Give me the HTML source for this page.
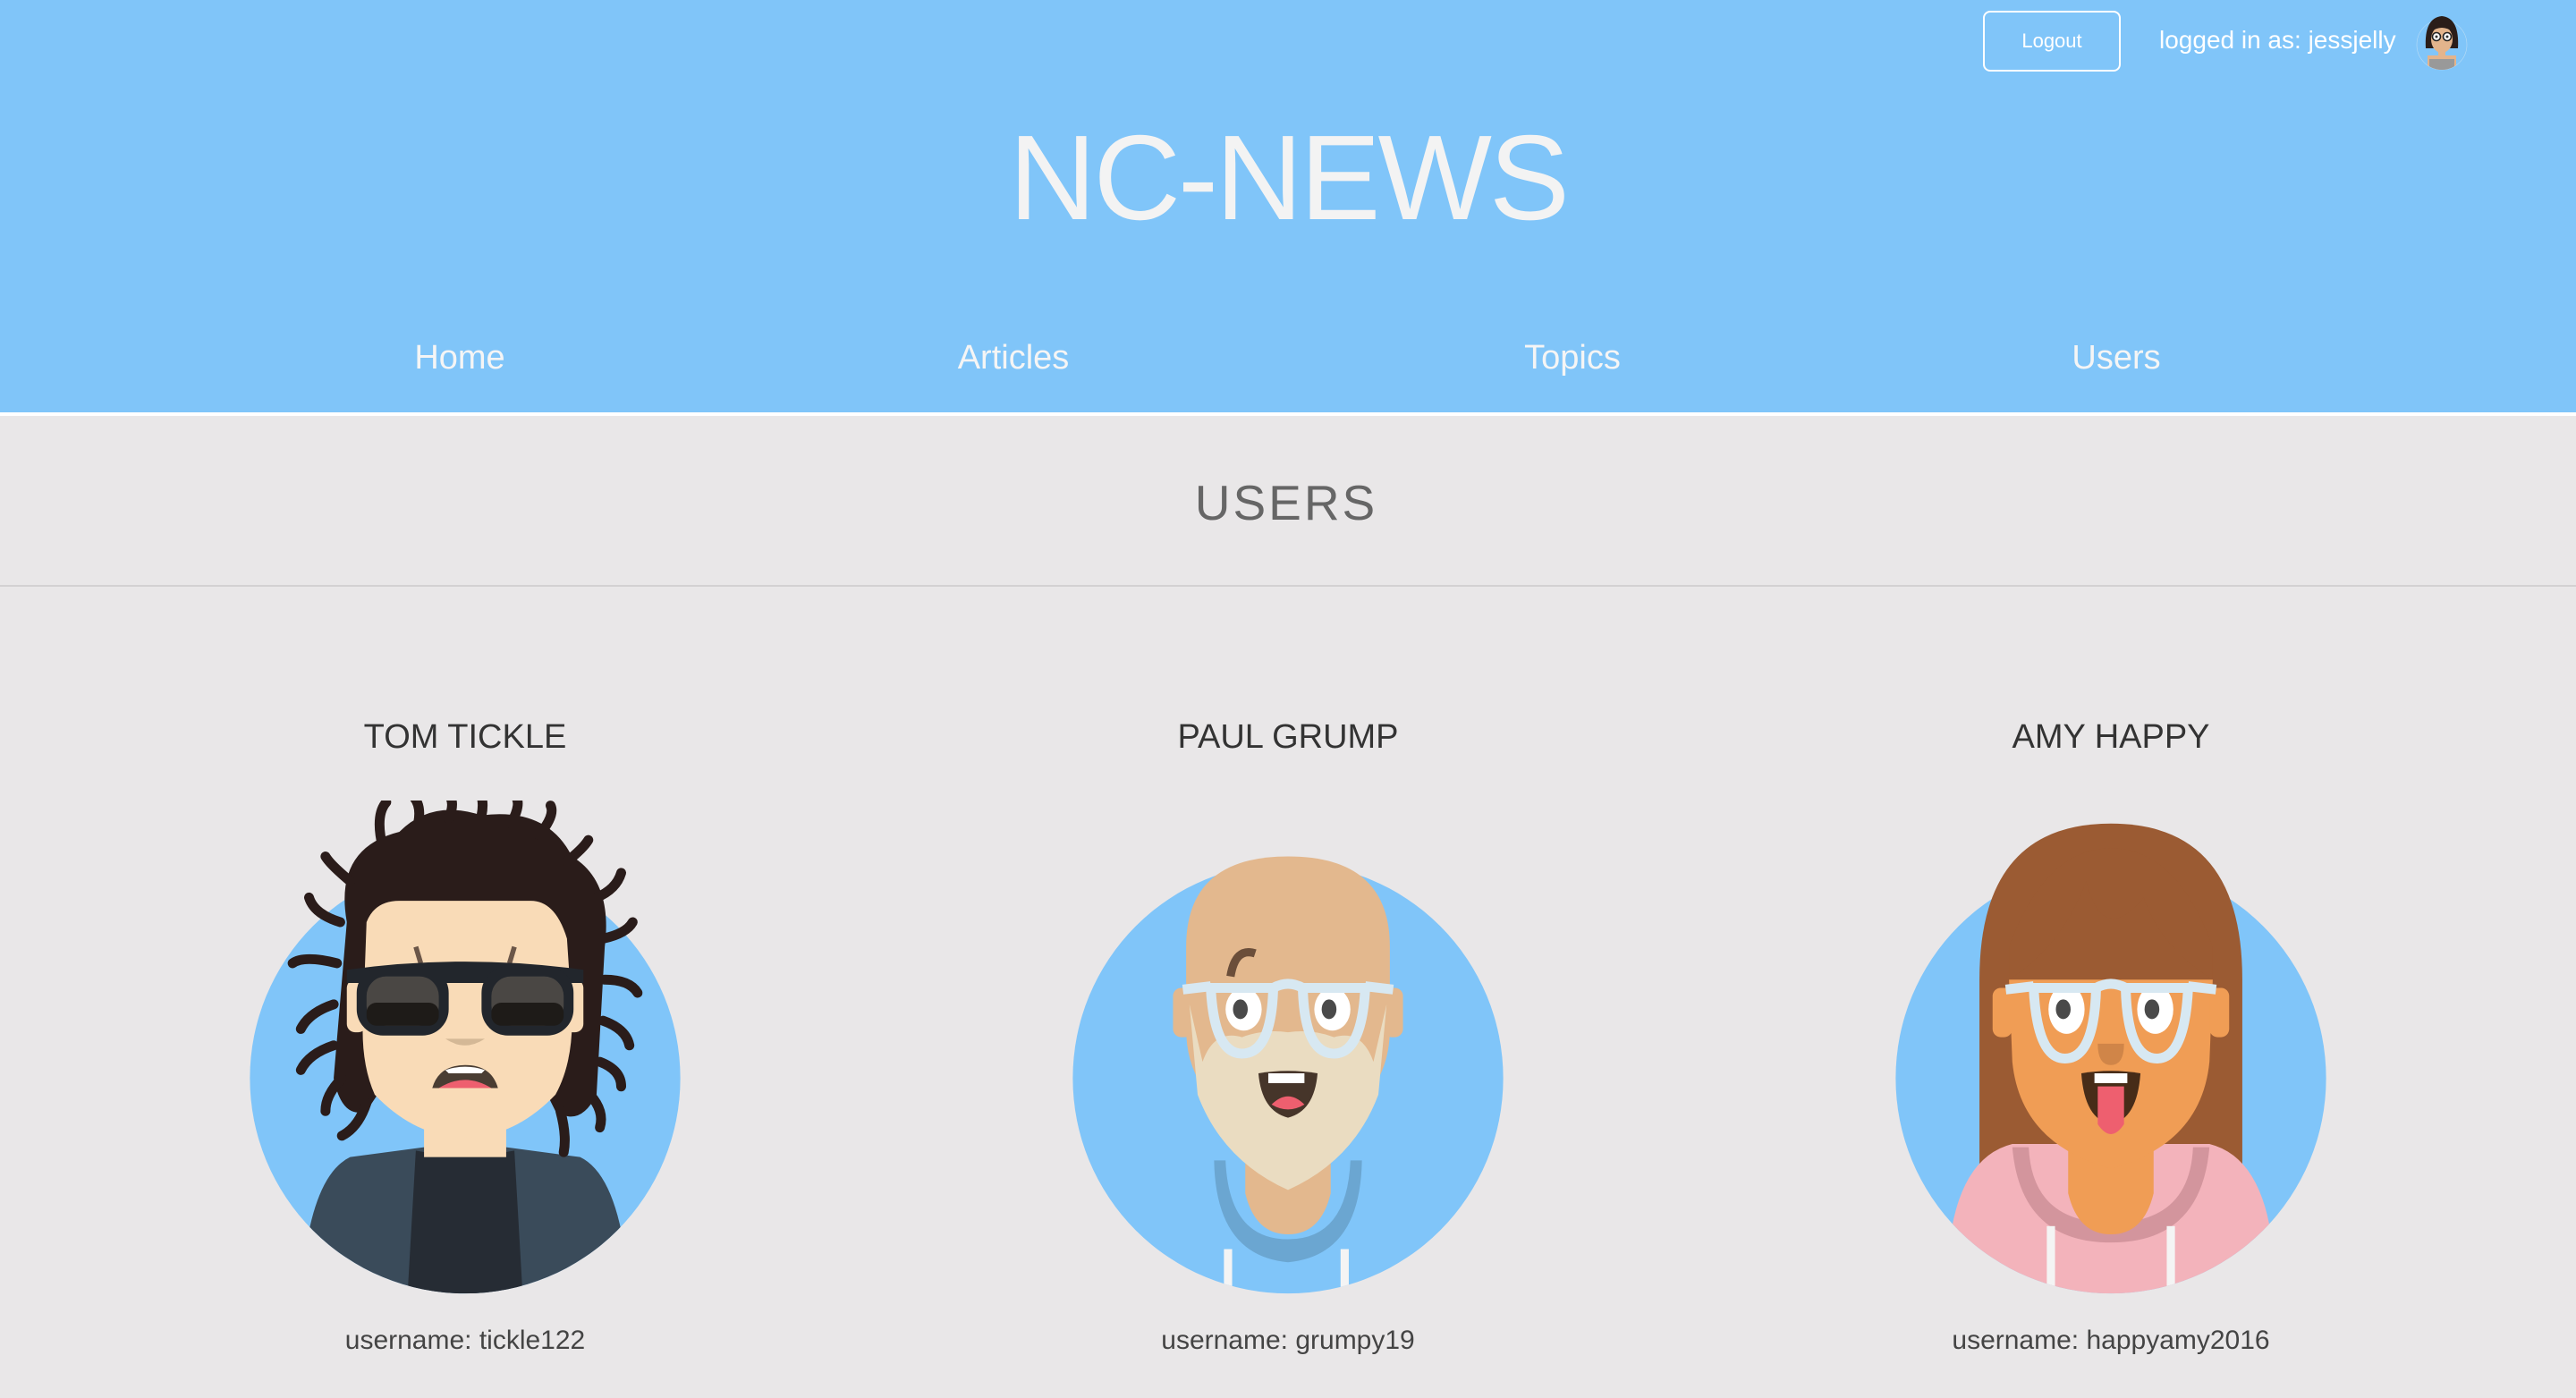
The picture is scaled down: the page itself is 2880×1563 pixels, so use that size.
<!DOCTYPE html>
<html><head><meta charset="utf-8"><style>
*{margin:0;padding:0;box-sizing:border-box}
html,body{width:2880px;height:1563px;overflow:hidden;background:#e9e7e8;font-family:"Liberation Sans",sans-serif}
.hdr{position:absolute;left:0;top:0;width:2880px;height:461px;background:#80c5f9}
.wl{position:absolute;left:0;top:461px;width:2880px;height:4px;background:#fff}
.t{position:absolute;white-space:nowrap;line-height:1}
.c{transform:translateX(-50%)}
.nav{font-size:38px;color:#f5f5f5;top:381px}
.name{font-size:38px;color:#333;top:805px}
.un{font-size:30px;color:#444;top:1484px}
.av{position:absolute;width:540px;height:621px}
</style></head><body>
<div class="hdr"></div><div class="wl"></div>
<div style="position:absolute;left:2217px;top:12px;width:154px;height:68px;border:2px solid #fff;border-radius:8px;color:#fff;font-size:22px;line-height:64px;text-align:center">Logout</div>
<div class="t" style="left:2414px;top:31px;font-size:28px;color:#fff">logged in as: jessjelly</div>
<svg style="position:absolute;left:2700px;top:14px" width="60" height="66" viewBox="0 0 60 66">
<circle cx="30" cy="36" r="28" fill="#80c5f9" stroke="#b9dcf5" stroke-width="0.6"/>
<clipPath id="sc"><circle cx="30" cy="36" r="28"/></clipPath>
<g clip-path="url(#sc)"><rect x="14" y="48" width="32" height="20" fill="#e3b48c"/><rect x="16" y="52" width="28" height="16" fill="#999"/></g>
<path d="M12 40 Q10 6 30 4 Q50 6 48 40 Z" fill="#2a1d19"/>
<ellipse cx="30" cy="30" rx="12" ry="15" fill="#e3b48c"/>
<rect x="26" y="40" width="8" height="10" fill="#e3b48c"/>
<path d="M17 22 Q30 12 43 22 L43 16 Q30 6 17 16Z" fill="#2a1d19"/>
<circle cx="24" cy="27" r="4.5" fill="#fff" stroke="#222" stroke-width="1.6"/><circle cx="36" cy="27" r="4.5" fill="#fff" stroke="#222" stroke-width="1.6"/>
<circle cx="24" cy="27" r="1.5" fill="#333"/><circle cx="36" cy="27" r="1.5" fill="#333"/>
</svg>
<div class="t c" style="left:1440px;top:131px;font-size:135px;color:#f3f3f3;letter-spacing:-3px">NC-NEWS</div>
<div class="t c nav" style="left:514px">Home</div>
<div class="t c nav" style="left:1133px">Articles</div>
<div class="t c nav" style="left:1758px">Topics</div>
<div class="t c nav" style="left:2366px">Users</div>
<div class="t c" style="left:1438px;top:535px;font-size:55px;color:#666;letter-spacing:3px">USERS</div>
<div style="position:absolute;left:0;top:654px;width:2880px;height:2px;background:#d3d1d2"></div>

<div class="t c name" style="left:520px">TOM TICKLE</div>
<div class="t c name" style="left:1440px">PAUL GRUMP</div>
<div class="t c name" style="left:2360px">AMY HAPPY</div>
<div class="t c un" style="left:520px">username: tickle122</div>
<div class="t c un" style="left:1440px">username: grumpy19</div>
<div class="t c un" style="left:2360px">username: happyamy2016</div>

<!-- Tom -->
<svg class="av" style="left:250px;top:895px" viewBox="-147 -169 294 338">
<defs><clipPath id="c1"><circle cx="0" cy="0" r="131"/></clipPath></defs>
<circle cx="0" cy="0" r="131" fill="#80c5f9"/>
<g clip-path="url(#c1)">
<path d="M-100 131 Q-95 60 -70 48 L-25 42 L25 42 L70 48 Q95 60 100 131Z" fill="#3a4b5a"/>
<path d="M-30 44 Q0 50 30 44 L35 131 L-35 131Z" fill="#262c34"/>
</g>
<path d="M-72 -95 Q-80 -140 -40 -150 Q-20 -170 10 -160 Q50 -165 65 -135 Q90 -120 85 -80 L80 10 Q70 30 55 20 L40 -10 L-40 -10 L-60 20 Q-75 25 -80 0Z" fill="#2a1c1a"/>
<g stroke="#2a1c1a" stroke-width="6" stroke-linecap="round" fill="none">
<path d="M-50 -140 Q-55 -160 -48 -168"/><path d="M-30 -150 Q-25 -165 -32 -172"/><path d="M-10 -158 Q-5 -170 -12 -174"/><path d="M10 -160 Q12 -170 8 -175"/><path d="M28 -155 Q35 -168 30 -172"/><path d="M45 -148 Q55 -160 52 -166"/><path d="M62 -132 Q72 -140 75 -145"/>
<path d="M-70 -120 Q-82 -130 -85 -135"/><path d="M-76 -95 Q-92 -100 -95 -110"/><path d="M-78 -70 Q-98 -75 -105 -70"/><path d="M-80 -45 Q-95 -40 -100 -30"/><path d="M-80 -20 Q-95 -15 -100 -5"/><path d="M-75 0 Q-85 10 -85 20"/><path d="M-60 15 Q-65 30 -75 35"/>
<path d="M80 -110 Q92 -115 95 -125"/><path d="M84 -85 Q98 -88 102 -95"/><path d="M85 -60 Q100 -60 105 -52"/><path d="M84 -35 Q98 -30 100 -20"/><path d="M82 -10 Q95 -5 95 5"/><path d="M76 10 Q85 20 82 30"/><path d="M58 20 Q62 35 60 45"/>
</g>
<rect x="-25" y="20" width="50" height="28" fill="#f9dbb7"/>
<path d="M-25 28 Q0 40 25 28 L25 20 L-25 20Z" fill="#e0c09c"/>
<path d="M-60 -95 Q-55 -108 -40 -108 L40 -108 Q55 -108 62 -85 L65 -40 Q66 -10 55 10 Q30 36 0 36 Q-30 36 -55 10 Q-64 -10 -62 -40Z" fill="#f9dbb7"/>
<rect x="-72" y="-60" width="12" height="32" rx="5" fill="#f9dbb7"/><rect x="60" y="-60" width="12" height="32" rx="5" fill="#f9dbb7"/>
<path d="M-30 -80 L-27 -70" stroke="#6b5648" stroke-width="3"/><path d="M30 -80 L27 -70" stroke="#6b5648" stroke-width="3"/>
<path d="M-72 -66 Q0 -76 72 -66 L72 -58 L-72 -58Z" fill="#22262c"/>
<rect x="-66" y="-68" width="56" height="42" rx="16" fill="#22262c"/><rect x="10" y="-68" width="56" height="42" rx="16" fill="#22262c"/>
<rect x="-60" y="-62" width="44" height="30" rx="12" fill="#4a4744"/><rect x="16" y="-62" width="44" height="30" rx="12" fill="#4a4744"/>
<rect x="-60" y="-46" width="44" height="14" rx="6" fill="#1e1b18"/><rect x="16" y="-46" width="44" height="14" rx="6" fill="#1e1b18"/>
<path d="M-12 -24 Q0 -16 12 -24Z" fill="#d4b896"/>
<path d="M-20 6 Q-16 -8 0 -8 Q16 -8 20 6Z" fill="#4a3d33"/>
<path d="M-16 6 Q0 -4 16 6Z" fill="#ee5f6f"/>
<path d="M-12 -5 Q0 -9 12 -5 L10 -3 L-10 -3Z" fill="#fff"/>
</svg>

<!-- Paul -->
<svg class="av" style="left:1170px;top:895px" viewBox="-147 -169 294 338">
<defs><clipPath id="c2"><circle cx="0" cy="0" r="131"/></clipPath></defs>
<circle cx="0" cy="0" r="131" fill="#80c5f9"/>
<g clip-path="url(#c2)">
<path d="M-45 50 Q-44 108 0 112 Q44 108 45 50 L38 50 Q36 98 0 98 Q-36 98 -38 50Z" fill="#6ba6d1"/>
<rect x="-39" y="104" width="5" height="60" fill="#f4f4f4"/><rect x="32" y="104" width="5" height="60" fill="#f4f4f4"/>
</g>
<path d="M-26 30 L26 30 L26 70 Q20 95 0 95 Q-20 95 -26 70Z" fill="#e3b88e"/>
<path d="M-62 -80 Q-62 -135 0 -135 Q62 -135 62 -80 L62 -30 Q62 20 0 40 Q-62 20 -62 -30Z" fill="#e3b88e"/>
<rect x="-70" y="-55" width="12" height="30" rx="5" fill="#e3b88e"/><rect x="58" y="-55" width="12" height="30" rx="5" fill="#e3b88e"/>
<path d="M-60 -45 L-55 10 Q-40 50 0 68 Q40 50 55 10 L60 -45 L52 -10 Q45 -30 28 -25 Q15 -30 0 -28 Q-15 -30 -28 -25 Q-45 -30 -52 -10Z" fill="#eadcc1"/>
<path d="M-18 -3 Q0 -6 18 -3 Q16 20 0 24 Q-16 20 -18 -3Z" fill="#46352a"/>
<rect x="-12" y="-3" width="22" height="6" fill="#fff"/>
<path d="M-10 16 Q0 6 10 16 Q0 22 -10 16Z" fill="#ee5f6f"/>
<path d="M-35 -62 Q-32 -80 -20 -76" stroke="#6b4e3a" stroke-width="5" fill="none"/>
<ellipse cx="-27" cy="-42" rx="11" ry="13" fill="#fff"/><ellipse cx="27" cy="-42" rx="11" ry="13" fill="#fff"/>
<ellipse cx="-29" cy="-42" rx="4.5" ry="6" fill="#4a4a4a"/><ellipse cx="25" cy="-42" rx="4.5" ry="6" fill="#4a4a4a"/>
<g fill="none" stroke="#d7e8f2" stroke-width="6" stroke-linejoin="round">
<path d="M-47 -55 L-9 -55 Q-10 -15 -28 -15 Q-45 -15 -47 -55Z"/><path d="M9 -55 L47 -55 Q45 -15 28 -15 Q10 -15 9 -55Z"/>
<path d="M-64 -54 L-47 -56 M47 -56 L64 -54 M-9 -55 Q0 -60 9 -55"/></g>
</svg>

<!-- Amy -->
<svg class="av" style="left:2090px;top:895px" viewBox="-147 -169 294 338">
<defs><clipPath id="c3"><circle cx="0" cy="0" r="131"/></clipPath></defs>
<circle cx="0" cy="0" r="131" fill="#80c5f9"/>
<path d="M-80 -60 Q-80 -155 0 -155 Q80 -155 80 -60 L80 90 L-80 90Z" fill="#9b5b33"/>
<g clip-path="url(#c3)">
<path d="M-100 131 Q-100 50 -60 40 L60 40 Q100 50 100 131Z" fill="#f3b3bb"/>
<path d="M-60 42 Q-55 100 0 100 Q55 100 60 42 L50 42 Q48 88 0 88 Q-48 88 -50 42Z" fill="#d3959d"/>
<rect x="-39" y="90" width="5" height="60" fill="#f4f4f4"/><rect x="34" y="90" width="5" height="60" fill="#f4f4f4"/>
</g>
<path d="M-26 20 L26 20 L26 70 Q20 95 0 95 Q-20 95 -26 70Z" fill="#f09d55"/>
<path d="M-26 40 Q0 55 26 40 L26 30 L-26 30Z" fill="#d68a4a"/>
<path d="M-62 -60 L62 -60 L60 -10 Q55 40 0 55 Q-55 40 -60 -10Z" fill="#f09d55"/>
<path d="M-62 -60 Q-30 -80 -15 -120 Q-5 -80 20 -110 Q30 -80 62 -60 L62 -80 Q40 -140 0 -140 Q-40 -140 -62 -80Z" fill="#9b5b33"/>
<rect x="-72" y="-55" width="12" height="30" rx="5" fill="#f09d55"/><rect x="60" y="-55" width="12" height="30" rx="5" fill="#f09d55"/>
<path d="M-18 -3 Q0 -6 18 -3 Q16 25 0 28 Q-16 25 -18 -3Z" fill="#472c18"/>
<rect x="-10" y="-3" width="20" height="6" fill="#fff"/>
<path d="M-8 5 L8 5 L8 28 Q0 40 -8 28Z" fill="#ee5f6f"/>
<path d="M-8 -21 L8 -21 Q8 -8 0 -8 Q-8 -8 -8 -21Z" fill="#d08548"/>
<ellipse cx="-27" cy="-42" rx="11" ry="15" fill="#fff"/><ellipse cx="27" cy="-42" rx="11" ry="15" fill="#fff"/>
<ellipse cx="-29" cy="-42" rx="4.5" ry="6" fill="#4a4a4a"/><ellipse cx="25" cy="-42" rx="4.5" ry="6" fill="#4a4a4a"/>
<g fill="none" stroke="#d7e8f2" stroke-width="6" stroke-linejoin="round">
<path d="M-47 -55 L-9 -55 Q-10 -12 -28 -12 Q-45 -12 -47 -55Z"/><path d="M9 -55 L47 -55 Q45 -12 28 -12 Q10 -12 9 -55Z"/>
<path d="M-64 -54 L-47 -56 M47 -56 L64 -54 M-9 -55 Q0 -60 9 -55"/></g>
</svg>
</body></html>
